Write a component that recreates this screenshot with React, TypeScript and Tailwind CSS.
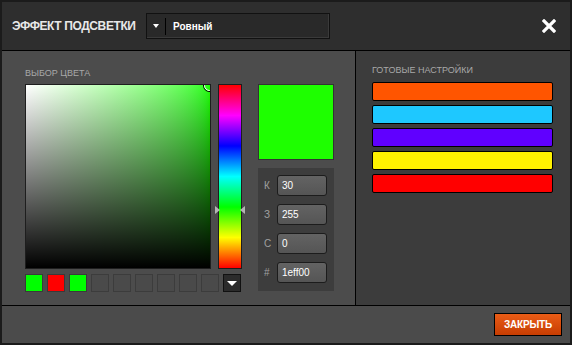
import React from "react";

const swatches = ["#00ff00", "#ff0000", "#00ff00", "", "", "", "", "", ""];
const presets = ["#ff5500", "#1ec8ff", "#6000ff", "#fff200", "#ff0000"];
const fields = [
  ["К", "30"],
  ["З", "255"],
  ["С", "0"],
  ["#", "1eff00"],
];

const App = () => {
  return (
    <div className="w-[572px] h-[345px] border-2 border-[#1b1b1b] flex flex-col font-['Liberation_Sans',Arial,sans-serif] select-none">
      {/* шапка */}
      <div className="h-[49px] shrink-0 flex items-center bg-[#2e2e2e] border-b border-black pl-[10px] pr-[14px]">
        <div className="w-[134px] text-[12px] font-bold text-[#e8e8e8] tracking-[-0.4px] whitespace-nowrap">
          ЭФФЕКТ ПОДСВЕТКИ
        </div>
        <div className="w-[184px] h-[26px] flex items-center bg-[#292929] border border-[#111] shadow-[inset_-1px_-1px_0_#3a3a3a]">
          <div className="w-[18px] flex justify-center">
            <div className="w-0 h-0 border-x-[3px] border-x-transparent border-t-[4px] border-t-white" />
          </div>
          <div className="w-px h-[17px] bg-black" />
          <span className="pl-[7px] text-[10px] font-bold text-white">Ровный</span>
        </div>
        <svg className="ml-auto" width="14" height="14" viewBox="0 0 14 14">
          <path d="M2 2 L12 12 M12 2 L2 12" stroke="#ffffff" strokeWidth="3.2" strokeLinecap="square" />
        </svg>
      </div>

      {/* тело */}
      <div className="h-[255px] shrink-0 flex border-b border-black">
        <div className="w-[354px] shrink-0 bg-[#4c4c4c] border-r border-black pl-[23px] pt-[16px]">
          <div className="text-[9px] leading-[12px] text-[#a8a8a8]">ВЫБОР ЦВЕТА</div>
          <div className="mt-[5px] flex gap-[16px]">
            <div className="w-[217px]">
              <div className="flex gap-[7px]">
                <div className="relative w-[186px] h-[185px] border border-[#1e1e1e] overflow-hidden bg-linear-to-r from-white to-[#1eff00]">
                  <div className="absolute inset-0 bg-linear-to-t from-black to-transparent" />
                  <div className="absolute -top-[5px] -right-[5px] w-[11px] h-[11px] rounded-full border-[1.5px] border-white shadow-[0_0_0_1px_#000]" />
                </div>
                <div className="relative w-[24px] h-[185px]">
                  <div className="w-full h-full border border-[#1e1e1e] bg-[linear-gradient(to_bottom,#ff0000,#ff00ff,#0000ff,#00ffff,#00ff00,#ffff00,#ff0000)]" />
                  <div className="absolute left-[-3px] top-[122px] w-0 h-0 border-y-[4.5px] border-y-transparent border-l-[5px] border-l-[#b4b4b4]" />
                  <div className="absolute right-[-3px] top-[122px] w-0 h-0 border-y-[4.5px] border-y-transparent border-r-[5px] border-r-[#b4b4b4]" />
                </div>
              </div>
              <div className="mt-[5px] flex gap-[4px]">
                {swatches.map((c, i) =>
                  c ? (
                    <div key={i} className="w-[18px] h-[18px] border border-[#3a3a3a]" style={{ backgroundColor: c }} />
                  ) : (
                    <div key={i} className="w-[18px] h-[18px] border border-[#3c3c3c] bg-[#4a4a4a]" />
                  )
                )}
                <div className="w-[18px] h-[18px] flex items-center justify-center bg-[#2b2b2b] border border-[#111]">
                  <div className="w-0 h-0 border-x-[5px] border-x-transparent border-t-[5px] border-t-white" />
                </div>
              </div>
            </div>

            <div className="w-[76px]">
              <div className="w-[76px] h-[76px] bg-[#1eff00] border border-[#333]" />
              <div className="mt-[8px] h-[123px] bg-[#3d3d3d] pt-[7px] pl-[6px] flex flex-col gap-[8px]">
                {fields.map(([label, value]) => (
                  <div key={label} className="flex items-center">
                    <span className="w-[13px] text-[10px] text-[#a0a0a0]">{label}</span>
                    <div className="w-[50px] h-[21px] flex items-center pl-[4px] rounded-[3px] border border-[#1c1c1c] bg-linear-to-b from-[#636363] to-[#555555] text-[10px] text-white">
                      {value}
                    </div>
                  </div>
                ))}
              </div>
            </div>
          </div>
        </div>

        <div className="flex-1 bg-[#3c3c3c] pl-[16px] pr-[17px] pt-[13px]">
          <div className="text-[9px] leading-[12px] text-[#a8a8a8]">ГОТОВЫЕ НАСТРОЙКИ</div>
          <div className="mt-[6px] flex flex-col gap-[4px]">
            {presets.map((c) => (
              <div key={c} className="h-[19px] border border-black rounded-[2px]" style={{ backgroundColor: c }} />
            ))}
          </div>
        </div>
      </div>

      {/* низ */}
      <div className="flex-1 bg-[#4b4b4b] flex items-center justify-end pr-[8px]">
        <button className="w-[68px] h-[23px] border border-black bg-linear-to-b from-[#ea5c16] to-[#c63d02] text-[10px] font-bold text-white tracking-[-0.2px]">
          ЗАКРЫТЬ
        </button>
      </div>
    </div>
  );
};

export default App;
